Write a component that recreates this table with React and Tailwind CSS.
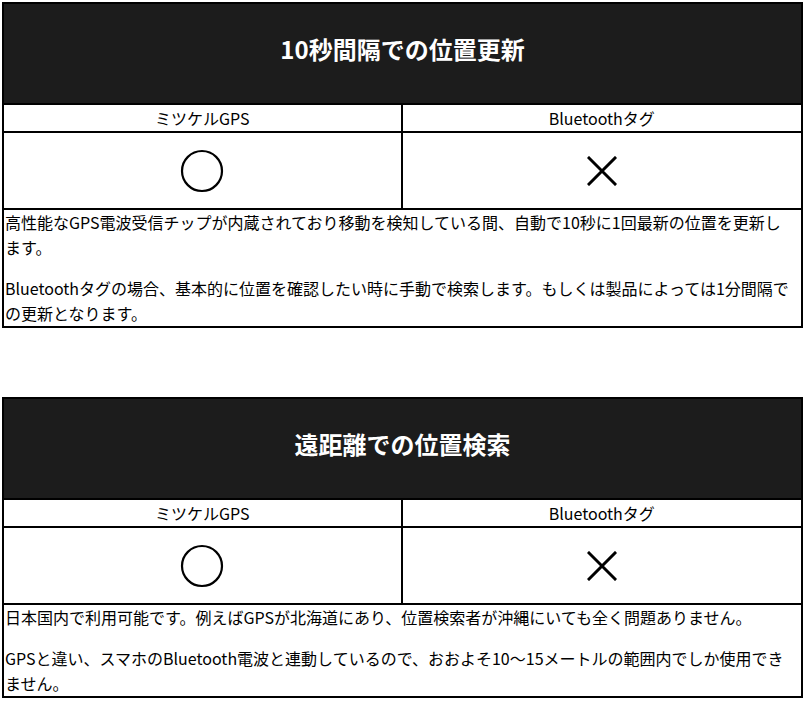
import React from 'react';

const sections = [
    {
        title: '10秒間隔での位置更新',
        texts: [
            '高性能なGPS電波受信チップが内蔵されており移動を検知している間、自動で10秒に1回最新の位置を更新します。',
            'Bluetoothタグの場合、基本的に位置を確認したい時に手動で検索します。もしくは製品によっては1分間隔での更新となります。',
        ],
    },
    {
        title: '遠距離での位置検索',
        texts: [
            '日本国内で利用可能です。例えばGPSが北海道にあり、位置検索者が沖縄にいても全く問題ありません。',
            'GPSと違い、スマホのBluetooth電波と連動しているので、おおよそ10〜15メートルの範囲内でしか使用できません。',
        ],
    },
];

function Circle() {
    return (
        <svg width="44" height="44" viewBox="0 0 44 44">
            <circle cx="22" cy="22" r="20" fill="none" stroke="#000" strokeWidth="2.2" />
        </svg>
    );
}

function Cross() {
    return (
        <svg width="30" height="30" viewBox="0 0 30 30">
            <path d="M2 2 L28 28 M28 2 L2 28" stroke="#000" strokeWidth="3" strokeLinecap="square" fill="none" />
        </svg>
    );
}

function CompareTable({ title, texts }) {
    return (
        <div className="border-2 border-black">
            <div className="flex h-[101px] items-center justify-center bg-[#1c1c1c] pb-[9px] border-b-2 border-black">
                <h2 className="text-white text-[24px] font-bold leading-none">{title}</h2>
            </div>
            <div className="grid grid-cols-2 border-b-2 border-black">
                <div className="h-[26px] flex items-center justify-center text-[16px] border-r-2 border-black">ミツケルGPS</div>
                <div className="h-[26px] flex items-center justify-center text-[16px]">Bluetoothタグ</div>
            </div>
            <div className="grid grid-cols-2 border-b-2 border-black">
                <div className="h-[75px] flex items-center justify-center border-r-2 border-black">
                    <Circle />
                </div>
                <div className="h-[75px] flex items-center justify-center">
                    <Cross />
                </div>
            </div>
            <div className="pl-[1px] pr-[11px] text-[16px] leading-[25px] text-black flex flex-col gap-4">
                {texts.map((t, i) => (
                    <p key={i}>{t}</p>
                ))}
            </div>
        </div>
    );
}

export default function App() {
    return (
        <div className="bg-white min-h-screen pt-[2px] px-[2px] text-black font-['Noto_Sans_CJK_JP',sans-serif]">
            <div className="flex flex-col gap-[69px]">
                {sections.map((s, i) => (
                    <CompareTable key={i} title={s.title} texts={s.texts} />
                ))}
            </div>
        </div>
    );
}
